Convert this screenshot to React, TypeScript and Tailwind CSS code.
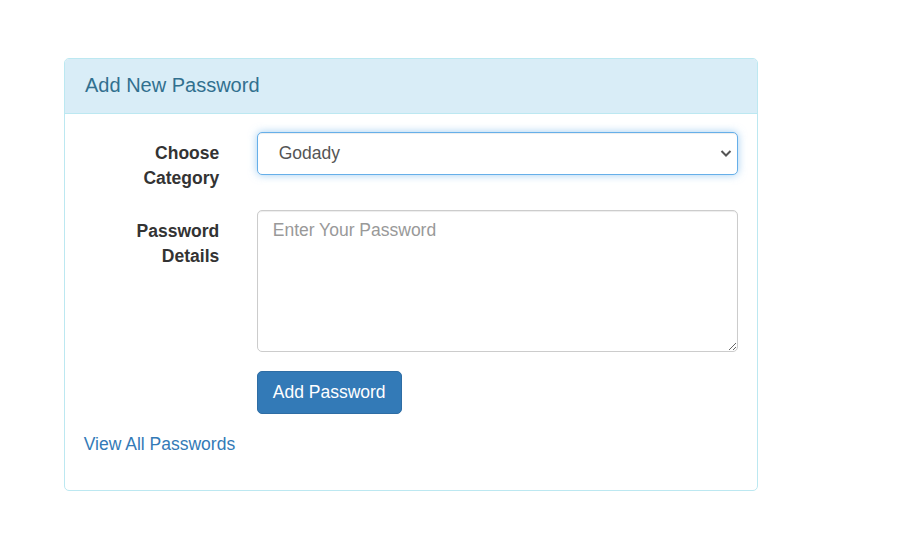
import React from "react";

export default function App() {
  return (
    <div className="min-h-screen bg-white pt-[58px] pl-[64px] font-['Liberation_Sans',Arial,sans-serif] text-[17.5px] leading-[25px] text-[#333]">
      {/* Panel */}
      <div className="w-[694px] rounded-[5px] border border-[#bce8f1] bg-white">
        <div className="rounded-t-[4px] border-b border-[#bce8f1] bg-[#d9edf7] px-[20px] pt-[13px] pb-[13px]">
          <h3 className="text-[20px] leading-[27.5px] text-[#31708f]">Add New Password</h3>
        </div>

        <div className="p-[18.75px] pb-[33px]">
          <form className="flex flex-col gap-[18.75px]">
            <div className="flex items-start gap-[37.5px]">
              <label className="w-[135.5px] shrink-0 pt-[8.75px] text-right font-bold">
                Choose Category
              </label>
              <div className="relative w-[481.5px]">
                <select
                  defaultValue="godady"
                  className="h-[42.5px] w-full appearance-none rounded-[5px] border border-[#66afe9] bg-white pl-[21px] pr-[40px] text-[17.5px] text-[#555] shadow-[inset_0_1px_1px_rgba(0,0,0,0.075),0_0_8px_rgba(102,175,233,0.6)] outline-none"
                >
                  <option value="godady">Godady</option>
                  <option value="gmail">Gmail</option>
                  <option value="facebook">Facebook</option>
                </select>
                <svg
                  className="pointer-events-none absolute right-[6px] top-[17px] h-[9px] w-[12px]"
                  viewBox="0 0 12 9"
                  fill="none"
                  stroke="#555"
                  strokeWidth="2"
                >
                  <path d="M1.5 2 L6 6.5 L10.5 2" />
                </svg>
              </div>
            </div>

            <div className="flex items-start gap-[37.5px]">
              <label className="w-[135.5px] shrink-0 pt-[8.75px] text-right font-bold">
                Password Details
              </label>
              <textarea
                rows={5}
                placeholder="Enter Your Password"
                className="block h-[142.5px] w-[481.5px] rounded-[5px] border border-[#ccc] px-[15px] py-[7.5px] text-[17.5px] leading-[25px] text-[#555] shadow-[inset_0_1px_1px_rgba(0,0,0,0.075)] outline-none placeholder:text-[#999]"
              />
            </div>

            <div className="flex gap-[37.5px]">
              <div className="w-[135.5px] shrink-0" />
              <button
                type="button"
                className="h-[42.5px] rounded-[5px] border border-[#2e6da4] bg-[#337ab7] px-[15px] text-[17.5px] text-white"
              >
                Add Password
              </button>
            </div>

            <a href="#" className="text-[#337ab7]">
              View All Passwords
            </a>
          </form>
        </div>
      </div>
    </div>
  );
}
